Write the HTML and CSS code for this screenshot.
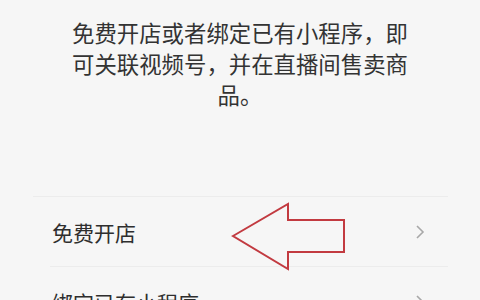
FILE: index.html
```html
<!DOCTYPE html>
<html lang="zh">
<head>
<meta charset="utf-8">
<link rel="stylesheet" href="styles.css">
</head>
<body>
<div class="page">
  <p class="desc">免费开店或者绑定已有小程序，即可关联视频号，并在直播间售卖商品。</p>
  <div class="list">
    <div class="row">
      <span class="label">免费开店</span>
      <svg class="chev" width="12" height="16" viewBox="0 0 12 16"><path d="M3 2 L9 8 L3 14" fill="none" stroke="#a8a8a8" stroke-width="1.6"/></svg>
    </div>
    <div class="row">
      <span class="label">绑定已有小程序</span>
      <svg class="chev" width="12" height="16" viewBox="0 0 12 16"><path d="M3 2 L9 8 L3 14" fill="none" stroke="#a8a8a8" stroke-width="1.6"/></svg>
    </div>
  </div>
  <svg class="arrow" width="480" height="300" viewBox="0 0 480 300">
    <polygon points="233,236 288,204 288,220 344,220 344,252 288,252 288,269" fill="none" stroke="#c23a40" stroke-width="2" stroke-linejoin="miter"/>
  </svg>
</div>
</body>
</html>
```
FILE: styles.css
```css
html, body {
  margin: 0;
  padding: 0;
  background: #f6f6f6;
  width: 480px;
  height: 300px;
  overflow: hidden;
}
.page {
  position: relative;
  width: 480px;
  height: 300px;
  font-family: "Noto Sans CJK SC", "Noto Sans", sans-serif;
  color: #333;
}
.desc {
  margin: 0 auto;
  padding-top: 17px;
  width: 340px;
  font-size: 22.4px;
  line-height: 31px;
  text-align: center;
  color: #333;
}
.list {
  margin: 86px 32px 0 33px;
  border-top: 1px solid #ececec;
}
.row {
  display: flex;
  align-items: center;
  justify-content: space-between;
  height: 70px;
  padding: 0 22px 0 19px;
  position: relative;
}
.row::after {
  content: "";
  position: absolute;
  left: 17px;
  right: 0;
  bottom: 0;
  border-bottom: 1px solid #ececec;
}
.label {
  font-size: 21px;
  color: #2e2e2e;
}
.chev {
  display: block;
}
.arrow {
  position: absolute;
  left: 0;
  top: 0;
  pointer-events: none;
}
```
